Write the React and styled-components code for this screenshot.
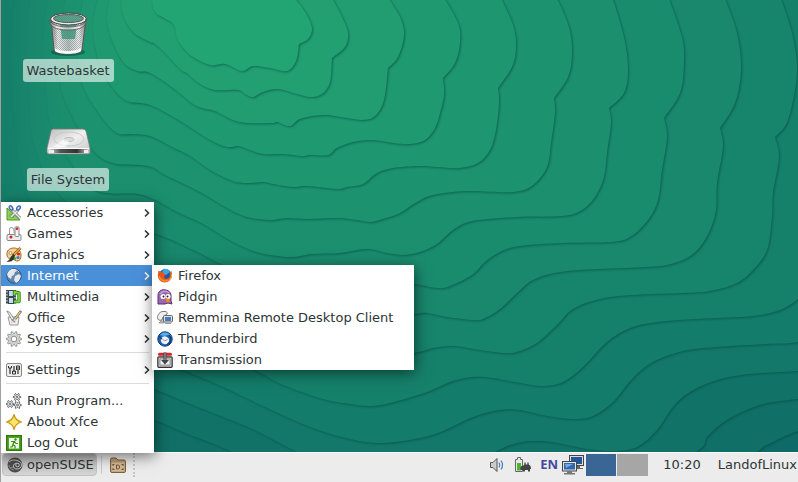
import React from "react";
import styled, { createGlobalStyle, css } from "styled-components";

const GlobalStyle = createGlobalStyle`
  *, *::before, *::after { box-sizing: border-box; }
  body { margin: 0; }
  button { font: inherit; color: inherit; border: 0; padding: 0; background: none; text-align: left; cursor: default; }
  ul { list-style: none; margin: 0; padding: 0; }
`;

const Screen = styled.div`
  display: flex;
  flex-direction: column;
  min-height: 100vh;
  border-left: 1px solid #a3a0a2;
  color: #2e3436;
  font: 13px/21px "DejaVu Sans", sans-serif;
  overflow: hidden;
`;

const Workspace = styled.main`
  flex: 1;
  position: relative;
  isolation: isolate;
  padding: 10px 22px;
`;

const WallpaperSvg = styled.svg`
  position: absolute;
  inset: 0;
  width: 100%;
  height: 100%;
  z-index: -1;
`;

const Shortcuts = styled.div`
  display: flex;
  flex-direction: column;
  align-items: center;
  gap: 37px;
  width: 90px;
`;

const Shortcut = styled.button`
  display: flex;
  flex-direction: column;
  align-items: center;
  gap: 1px;

  svg { width: 48px; height: 48px; display: block; }
`;

const ShortcutLabel = styled.span`
  padding: 1px 4px;
  border-radius: 3px;
  background: rgba(255, 255, 255, 0.6);
  white-space: nowrap;
`;

const Panel = styled.footer`
  position: relative;
  display: flex;
  align-items: center;
  height: 30px;
  padding: 0 1px 6px 1px;
  border-top: 1px solid #fafafa;
  background: #ececec;
  white-space: nowrap;
`;

const StartButton = styled.button`
  display: flex;
  align-items: center;
  gap: 4px;
  height: 23px;
  padding: 0 2px 0 4px;
  border: 1px solid #c2c2c2;
  border-radius: 4px;
  background: linear-gradient(#b4b4b4, #d6d6d6);
`;

const Divider = styled.span`
  width: 1px;
  height: 18px;
  margin: 0 8px 0 4px;
  background: #c8c8c8;
`;

const Grip = styled.span`
  width: 0;
  height: 24px;
  margin-left: 7px;
  border-left: 2px dotted #c6c6c6;
`;

const PanelButton = styled.button`
  display: flex;
`;

const Tray = styled.div`
  display: flex;
  align-items: center;
  margin-left: auto;
`;

const TrayButton = styled.button`
  display: flex;
  margin-right: ${(p) => p.$gap}px;
`;

const Language = styled.button`
  width: 18px;
  margin-right: 4px;
  color: #434a9f;
  font: bold 13px/21px "Noto Sans", sans-serif;
`;

const Workspaces = styled.div`
  display: flex;
  gap: 1px;
`;

const Pager = styled.button`
  width: ${(p) => (p.$active ? 30 : 31)}px;
  height: 22px;
  background: ${(p) => (p.$active ? "#396695" : "#a6a6a6")};
`;

const Clock = styled.time`
  margin: 0 17px 0 15px;
`;

const menuBox = css`
  position: absolute;
  z-index: 2;
  background: #fff;
  box-shadow: 1px 3px 14px rgba(0, 0, 0, 0.55);
`;

const Menu = styled.ul`
  ${menuBox}
  left: 0;
  bottom: 29px;
  width: 153px;
`;

const Submenu = styled.ul`
  ${menuBox}
  left: calc(100% - 2px);
  top: 0;
  width: 262px;
`;

const MenuEntry = styled.li`
  position: relative;
`;

const MenuButton = styled.button`
  display: flex;
  align-items: center;
  gap: 5px;
  width: 100%;
  height: 21px;
  padding: 0 4px 0 5px;
  white-space: nowrap;
  ${(p) => p.$active && css`
    background: #4a90d9;
    color: #fff;
  `}

  span { flex: 1; }
`;

const Rule = styled.li`
  height: 10px;
  padding: 3px 5px 0;

  &::before {
    content: "";
    display: block;
    height: 1px;
    background: #dcdcdc;
  }
`;

/* Each ridge is a list of smooth runs; runs meet at a sharp notch. */
const ridges = [
  [[[152,-4],[155,12],[173,24],[178,40],[190,55],[210,65],[225,64],[242,71],[253,66],[270,68],[287,71],[296,61],[299,44]],[[299,44],[308,39],[312,28],[305,12],[293,-4]]],
  [[[121,-4],[123,15],[133,32],[150,42],[155,44],[165,53],[180,69],[188,74],[200,84],[215,90],[238,90],[245,94],[253,97],[263,92],[278,89],[297,94],[310,97],[322,94],[330,82],[332,58]],[[332,58],[345,47],[348,33],[342,17],[331,-4]]],
  [[[110,-4],[107,20],[112,40],[123,62],[137,71],[150,73],[173,88],[193,104],[205,109],[215,111],[233,120],[247,123],[272,123],[277,122],[290,126],[300,119],[323,115],[347,118],[363,120],[375,116],[384,100],[388,68]],[[388,68],[398,57],[404,35],[400,17],[387,-4]]],
  [[[98,-4],[93,30],[100,65],[112,87],[127,101],[150,105],[180,121],[210,140],[227,147],[238,146],[247,149],[263,154],[283,154],[302,156],[310,155],[328,155],[337,148],[353,142],[373,140],[393,143],[410,144],[425,140],[435,128],[440,113],[444,95],[443,78]],[[443,78],[455,63],[460,43],[458,23],[443,-4]]],
  [[[84,-4],[77,40],[82,83],[100,115],[117,133],[133,134],[150,136],[170,146],[190,156],[210,170],[233,181],[247,183],[263,182],[273,184],[293,187],[307,186],[337,189],[347,187],[363,184],[377,173],[393,168],[420,166],[437,167],[460,168],[478,163],[490,150],[496,130],[499,103],[498,88]],[[498,88],[512,67],[516,47],[513,25],[500,-4]]],
  [[[66,-4],[59,40],[60,83],[70,112],[87,142],[100,157],[117,164],[148,166],[167,176],[200,192],[227,208],[247,217],[270,220],[287,218],[307,219],[337,218],[357,220],[370,222],[383,219],[400,213],[417,202],[433,195],[467,191],[513,192],[533,185],[547,167],[551,143],[555,113],[554,98]],[[554,98],[568,77],[572,53],[569,27],[556,-4]]],
  [[[48,-4],[43,50],[47,97],[50,123],[67,157],[95,190],[137,194],[153,199],[177,212],[203,224],[233,242],[260,253],[290,257],[313,254],[340,253],[367,249],[387,253],[403,255],[420,252],[437,244],[453,230],[473,221],[517,217],[563,216],[582,210],[595,197],[604,177],[607,153],[611,123],[609,108]],[[609,108],[624,93],[628,70],[624,37],[612,-4]]],
  [[[31,-4],[26,50],[30,110],[34,145],[53,187],[90,218],[153,233],[193,250],[223,265],[260,281],[300,291],[340,288],[375,280],[414,284],[437,288],[450,286],[472,275],[485,262],[500,252],[520,246],[563,243],[610,242],[630,237],[648,220],[658,200],[662,170],[667,137],[664,118]],[[664,118],[680,93],[684,63],[682,37],[668,-4]]],
  [[[14,-4],[11,60],[15,133],[22,170],[34,206],[80,244],[153,266],[220,294],[275,317],[320,322],[370,316],[414,314],[427,313],[447,317],[472,320],[483,319],[500,309],[517,293],[533,280],[560,272],[600,269],[647,267],[667,265],[687,258],[700,247],[710,230],[716,210],[717,183],[723,147],[720,128]],[[720,128],[735,103],[741,70],[737,33],[724,-4]]],
  [[[-9,-4],[-9,180],[50,260],[153,297],[230,329],[290,350],[350,363],[414,353],[433,348],[453,346],[480,350],[503,353],[517,352],[537,343],[557,325],[573,309],[600,299],[633,295],[683,293],[710,291],[737,283],[753,270],[767,250],[772,217],[773,193],[779,157],[775,137]],[[775,137],[788,120],[797,73],[792,33],[780,-4]]],
  [[[-9,-4],[-9,230],[50,290],[153,326],[220,353],[255,370],[283,385],[323,399],[350,404],[370,406],[390,403],[427,392],[453,381],[473,377],[493,378],[520,383],[543,386],[563,382],[583,367],[607,342],[633,327],[667,321],[717,318],[753,316],[780,310],[798,299],[825,277],[840,190]],[[840,190],[850,-4]]],
  [[[-9,-4],[-9,280],[100,336],[183,370],[223,387],[267,408],[310,427],[350,439],[383,443],[420,438],[443,431],[473,417],[500,410],[520,410],[547,416],[573,419],[593,416],[613,402],[633,378],[653,362],[683,351],[717,347],[767,344],[798,342],[850,330]],[[850,330],[850,-4]]],
  [[[-9,-4],[-9,330],[100,368],[154,389],[200,408],[250,428],[297,452],[350,477],[430,485],[495,452],[517,443],[537,441],[557,443],[587,449],[613,451],[637,447],[657,430],[673,407],[690,392],[717,380],[750,374],[798,371],[850,366]],[[850,366],[850,-4]]],
  [[[-9,-4],[-9,370],[80,392],[154,420],[190,435],[232,452],[350,510],[620,500],[696,452],[707,437],[727,420],[760,405],[798,399],[850,395]],[[850,395],[850,-4]]],
  [[[-9,-4],[-9,410],[120,436],[190,470],[400,560],[700,500],[757,452],[773,442],[798,431],[850,415]],[[850,415],[850,-4]]],
];

const ridgeFills = ["#23a573", "#22a072", "#219d71", "#1f9970", "#1e966f", "#1d926f", "#1b8f6e", "#1a8c6e", "#19886d", "#17846c", "#16816b", "#147c6a", "#137869", "#117368", "#106f67"];

function smooth(points, first) {
  let d = first ? `M${points[0].join(" ")}` : "";
  for (let i = 0; i < points.length - 1; i += 1) {
    const a = points[i - 1] || points[i];
    const b = points[i];
    const c = points[i + 1];
    const e = points[i + 2] || c;
    d += `C${b[0] + (c[0] - a[0]) / 6} ${b[1] + (c[1] - a[1]) / 6} ${c[0] - (e[0] - b[0]) / 6} ${c[1] - (e[1] - b[1]) / 6} ${c[0]} ${c[1]}`;
  }
  return d;
}

function Wallpaper() {
  return (
    <WallpaperSvg viewBox="1 0 797 452" preserveAspectRatio="xMidYMid slice" aria-hidden="true">
      <defs>
        <filter id="ridge" filterUnits="userSpaceOnUse" x="-20" y="-20" width="900" height="620" colorInterpolationFilters="sRGB">
          <feDropShadow dx="1" dy="1" stdDeviation="1" floodColor="#04483f" floodOpacity="0.6" />
        </filter>
        <linearGradient id="westSlope">
          <stop stopColor="#147c69" stopOpacity=".85" />
          <stop offset="1" stopColor="#1d926f" stopOpacity="0" />
        </linearGradient>
      </defs>
      <rect x="-20" y="-20" width="900" height="620" fill="#0e6a66" />
      {ridges.map((runs, i) => (
        <path key={i} filter="url(#ridge)" fill={ridgeFills[i]} d={`${runs.map((r, n) => smooth(r, n === 0)).join("")}Z`} />
      )).reverse()}
      <path d="M0 0h95v204H0z" fill="url(#westSlope)" />
    </WallpaperSvg>
  );
}

const BinIcon = () => (
  <svg viewBox="0 0 48 48" aria-hidden="true">
    <defs>
      <linearGradient id="binSide"><stop stopColor="#777" /><stop offset=".2" stopColor="#eee" /><stop offset=".5" stopColor="#b9c4bf" /><stop offset=".8" stopColor="#eee" /><stop offset="1" stopColor="#777" /></linearGradient>
      <pattern id="mesh" width="2" height="2" patternUnits="userSpaceOnUse"><path d="M0 0h1v1H0zM1 1h1v1H1z" fill="#66736e" opacity=".45" /></pattern>
    </defs>
    <ellipse cx="24" cy="42" rx="17" ry="4" fill="#0b4a3a" opacity=".55" />
    <path d="M7 9l3 31c1 5 27 5 28 0l4-31z" fill="url(#binSide)" stroke="#555" />
    <path d="M16 14h17l-2 15H18z" fill="#259a77" opacity=".75" />
    <path d="M9 14l3 25c3 4 21 4 24 0l3-25z" fill="url(#mesh)" />
    <path d="M11 38c4 4 22 4 26 0v3c-3 4-23 4-26 0z" fill="#fff" opacity=".85" />
    <ellipse cx="24.500" cy="9" rx="18" ry="6" fill="#e9e9e9" stroke="#444" />
    <ellipse cx="24.500" cy="8.500" rx="15" ry="4" fill="#56a78d" stroke="#555" />
    <ellipse cx="24.500" cy="8.500" rx="15" ry="4" fill="url(#mesh)" />
    <path d="M6 9c0 4 5 8 18 8s18-4 18-8v3c0 4-5 8-18 8S6 16 6 12z" fill="url(#binSide)" stroke="#555" strokeWidth=".8" />
  </svg>
);

const DriveIcon = () => (
  <svg viewBox="0 0 48 48" aria-hidden="true">
    <defs>
      <linearGradient id="driveTop" x2="1" y2="1"><stop stopColor="#bbb" /><stop offset=".5" stopColor="#f0f0f0" /><stop offset="1" stopColor="#c2c2c2" /></linearGradient>
      <linearGradient id="driveFront"><stop stopColor="#ddd" /><stop offset=".3" stopColor="#555" /><stop offset=".7" stopColor="#333" /><stop offset="1" stopColor="#ccc" /></linearGradient>
    </defs>
    <path d="M9 10h30q2 0 3 2l4 17v5q0 1-2 1H5q-2 0-2-2v-4L7 12q0-2 2-2z" fill="url(#driveTop)" stroke="#777" strokeWidth=".8" />
    <path d="M4 30h41v4H4z" fill="url(#driveFront)" />
    <path d="M4 29.500h41" stroke="#fff" />
    <path d="M5 31h5v3H5zM40 31h4v3h-4z" fill="#eee" />
    <ellipse cx="25" cy="20" rx="15" ry="7" fill="none" stroke="#c3c3c3" strokeWidth=".8" />
    <ellipse cx="25" cy="20.500" rx="5" ry="2" fill="#ddd" stroke="#b5b5b5" strokeWidth=".8" />
    <path d="M20 20l-11 8h12q4-3 4-6z" fill="#fff" opacity=".55" />
  </svg>
);

const gearTeeth = (count, cx, cy, inner, outer) => {
  const pts = [];
  for (let i = 0; i < count * 4; i += 1) {
    const r = i % 4 < 2 ? outer : inner;
    const t = ((i - 0.5) / (count * 4)) * Math.PI * 2;
    pts.push(`${(cx + r * Math.cos(t)).toFixed(2)},${(cy + r * Math.sin(t)).toFixed(2)}`);
  }
  return pts.join(" ");
};

const glyphs = {
  accessories: (
    <>
      <path d="M1 3v12h13z" fill="#8ed058" stroke="#4f9a22" />
      <path d="M4 9v3h4z" fill="#fff" stroke="#4f9a22" strokeWidth=".7" />
      <path d="M6 5l8 8M12 5L5 12" stroke="#777" strokeWidth="3" />
      <path d="M6 5l8 8M12 5L5 12" stroke="#e8e8e8" strokeWidth="1.600" />
      <ellipse cx="5" cy="3" rx="1.500" ry="2.300" transform="rotate(-35 5 3)" fill="#dbe6f4" stroke="#3868a8" strokeWidth="1.400" />
      <ellipse cx="12.500" cy="3" rx="1.500" ry="2.300" transform="rotate(35 12.500 3)" fill="#dbe6f4" stroke="#3868a8" strokeWidth="1.400" />
    </>
  ),
  games: (
    <>
      <path d="M3.500 9V3.500Q3.500 1.500 5.500 1.500T8 4v3h2" fill="none" stroke="#999" />
      <rect x="1" y="8.500" width="14" height="6" rx="1" fill="#ececec" stroke="#888" />
      <rect x="9" y=".8" width="4" height="9.700" rx="1" fill="#f5f5f5" stroke="#888" />
      <circle cx="11" cy="2.800" r="1.300" fill="#d22" />
      <circle cx="5" cy="11" r="1.600" fill="#d22" />
    </>
  ),
  graphics: (
    <>
      <path d="M8 1C3 1 .5 4 1 8c.4 3 2 4 4 3s3 3 6 3 4-2 4-6-3-7-7-7z" fill="#f3d29a" stroke="#a5691c" />
      <circle cx="4.500" cy="6" r="1.500" fill="#fff" stroke="#a5691c" strokeWidth=".7" />
      <circle cx="12.500" cy="7" r="1.600" fill="#d22" /><circle cx="12" cy="10.500" r="1.600" fill="#37c" /><circle cx="8.500" cy="11.500" r="1.600" fill="#3a3" />
      <path d="M14.500 1L7 8.500" stroke="#8a5716" strokeWidth="2.800" /><path d="M14.500 1L7 8.500" stroke="#e8a743" strokeWidth="1.600" />
      <path d="M7.500 7L5 9.500Q4 13 .5 14.500q5 1 7-2l1.500-4z" fill="#333" />
    </>
  ),
  internet: (
    <>
      <circle cx="8" cy="8" r="7.200" fill="#5f86ad" stroke="#33557c" />
      <path d="M3 3c2-2 4-2 6-2l2 2-2 1-1 3-2 1-1 3-3-2-1-3zM9 8l4-2 2 2-2 5-3 2-2-3z" fill="#e3e8ea" />
      <path d="M2 5c2-4 8-5 11-1" stroke="#fff" fill="none" opacity=".6" />
    </>
  ),
  multimedia: (
    <>
      <path d="M0 1h10v14H0z" fill="#3a4750" /><path d="M3 2h4v5H3zM3 9h4v5H3z" fill="#c5dced" />
      <path d="M1 2v13M9 2v13" stroke="#fff" strokeDasharray="1.500 1.500" />
      <path d="M8 12.500h5V4L8.500 2.800V6" fill="none" stroke="#2d7d10" strokeWidth="3.400" strokeLinejoin="round" />
      <path d="M8 12.500h5V4L8.500 2.800V6" fill="none" stroke="#7bd843" strokeWidth="1.800" strokeLinejoin="round" />
    </>
  ),
  office: (
    <>
      <path d="M2 7h11l-1 8H4z" fill="#eee" stroke="#999" />
      <path d="M5 9h5v4H5z" fill="#cfdcf0" /><path d="M6 10l3 2" stroke="#d55" />
      <path d="M.8 1l3.200 1.500 4 6.500-2 1z" fill="#f3f3f3" stroke="#777" strokeWidth=".8" />
      <path d="M15 1l-6 8" stroke="#555" strokeWidth="2.600" /><path d="M14.500 1.500L9 9" stroke="#e9c27c" strokeWidth="1.500" />
    </>
  ),
  system: (
    <>
      <polygon points={gearTeeth(10, 8, 8, 5.5, 7.6)} fill="#dedede" stroke="#8b8b8b" strokeWidth=".9" strokeLinejoin="round" />
      <circle cx="8" cy="8" r="2.800" fill="#fff" stroke="#8b8b8b" /><circle cx="8" cy="8" r="4.200" fill="none" stroke="#bbb" strokeWidth=".8" />
    </>
  ),
  settings: (
    <>
      <rect x=".5" y="1.500" width="15" height="13" rx="1.500" fill="#eee" stroke="#888" />
      <path d="M4 6v6M8 4v6M12 7v5" stroke="#333" strokeWidth="1.200" />
      <path d="M2.500 4v2h3V4M10.500 8V4h3v4M6.500 9h3v3h-3zM10.500 6h3" fill="none" stroke="#333" />
    </>
  ),
  run: (
    <g fill="#fff" stroke="#444" strokeWidth=".8" strokeLinejoin="round">
      <polygon points={gearTeeth(6, 11, 4, 2.3, 3.8)} /><circle cx="11" cy="4" r="1" />
      <polygon points={gearTeeth(6, 4, 11, 2.3, 3.8)} /><circle cx="4" cy="11" r="1" />
      <polygon points={gearTeeth(6, 11.5, 12, 2.3, 3.8)} /><circle cx="11.500" cy="12" r="1" />
    </g>
  ),
  about: <path d="M8 .5c.9 4 3.500 6.600 7.500 7.500-4 .9-6.600 3.500-7.500 7.500C7.100 11.500 4.500 8.900.5 8 4.500 7.100 7.100 4.500 8 .5z" fill="#fbe468" stroke="#c69a17" strokeWidth="1.200" strokeLinejoin="round" />,
  logout: (
    <>
      <rect x=".7" y=".7" width="14.600" height="14.600" fill="#4fa81d" stroke="#2f7a0a" strokeWidth="1.400" />
      <rect x="3" y="3" width="10" height="10.500" fill="#f2faed" />
      <circle cx="9.500" cy="4.500" r="1.200" fill="#388c12" />
      <path d="M5 6.500h3L7 9.500l2 1.500v2.500M7 9.500L6 12H4M8.500 6.500l1.500 2h2" stroke="#388c12" strokeWidth="1.200" fill="none" />
    </>
  ),
  firefox: (
    <>
      <circle cx="8.300" cy="7.500" r="6.500" fill="#2457a8" /><path d="M6 1c4-1 6 1 7 3l-4 3-4-2z" fill="#39a9df" />
      <path d="M1.500 2.500L4 4l3-.5-1 2 3 1-2 2 1 2c3 1 5-1 5-4l1-4c2 4 1 8-2 10.500C7 16.500 1 13 .8 7.500z" fill="#e3561a" />
      <path d="M13 3c2 5 1 8-3 10 3 0 5-3 4.800-6z" fill="#fbc02d" /><path d="M2 8c1 4 5 6 9 4" stroke="#f58b20" strokeWidth="1.500" fill="none" />
    </>
  ),
  pidgin: (
    <>
      <path d="M1 15V7C1 3 3 .8 7 .8S14 3 14 7v5l1 3-4-1-3 1z" fill="#9968ae" stroke="#5b2d73" />
      <path d="M3 5c2-3 6-4 9-1" stroke="#c9a5d6" strokeWidth="1.300" fill="none" />
      <circle cx="6" cy="7.500" r="2.500" fill="#fff" /><circle cx="11" cy="7.500" r="2.500" fill="#fff" />
      <circle cx="6.500" cy="7.500" r="1" fill="#222" /><circle cx="10.500" cy="7.500" r="1" fill="#222" />
      <path d="M8 9l4 1 1 3-3 .5z" fill="#f28a22" />
    </>
  ),
  remmina: (
    <>
      <path d="M6 1.500c4-.5 5 1.500 4 2.500L6 7l-1 3c-3 1-4.500-.5-4.500-2.500 0-3 2.500-6 5.500-6z" fill="#eee" stroke="#777" />
      <path d="M2 13h5v-2H4z" fill="#ccc" stroke="#777" strokeWidth=".7" />
      <rect x="6.500" y="5.500" width="9" height="6.500" rx="1" fill="#e3e3de" stroke="#666" />
      <path d="M8 7h6v4H8z" fill="#487ac0" /><path d="M8 13.500h6" stroke="#999" />
    </>
  ),
  thunderbird: (
    <>
      <circle cx="8" cy="8" r="7.200" fill="#1e63b4" stroke="#103968" />
      <path d="M3 4C6 0 12 1 14 5l-3-1-4 1z" fill="#56b0ea" />
      <path d="M4 7q3-3 6-1 3 2 2 5-2 3-5 2-4-1-3-6z" fill="#eef1f5" />
      <path d="M5.500 8l2 2 3-1.500" fill="none" stroke="#8f9dad" /><path d="M1.500 5l3.500 3M12 4c3 3 2 7-2 10" stroke="#113f80" strokeWidth="1.500" fill="none" />
    </>
  ),
  transmission: (
    <>
      <rect x=".8" y="4.800" width="14.400" height="10.500" rx="1" fill="#c6c6c6" stroke="#333" strokeWidth="1.200" />
      <path d="M3 13V7h10v6z" fill="#eee" stroke="#666" strokeWidth=".6" />
      <rect x="1" y=".7" width="14" height="3" rx="1.500" fill="#d9222a" />
      <path d="M6.500.5h3V8H12l-4 4.500L4 8h2.500z" fill="#444" /><path d="M7.500 1v7h1V1z" fill="#aaa" />
    </>
  ),
  suse: (
    <>
      <circle cx="8" cy="8" r="7.500" fill="#4e4e4e" />
      <path d="M2 5c2-2 5-2.500 8-1.500 3 1 4.500 2 4.500 4.500s-2 4-4.500 4-4-1.500-3.500-3.500S9 6 10.500 6.500" fill="none" stroke="#c3c3c3" strokeWidth="1" />
      <circle cx="10.500" cy="8" r="1.800" fill="none" stroke="#c3c3c3" /><path d="M2 8c0 3 2 4.500 5 5M3 11l3-1" stroke="#8c8c8c" fill="none" />
    </>
  ),
  folder: (
    <>
      <path d="M.5 13V2.500Q.5 1 2 1h4l2 2h6q1.500 0 1.500 1.500V14q0 1.500-1.500 1.500H2Q.5 15.500.5 14z" fill="#b89a73" stroke="#7b603e" />
      <path d="M1.500 5.500h13v9h-13z" fill="#d3ba96" />
      <path d="M6.500 8h2l1 1v2l-1 1h-2zM2.500 7.500h2M2.500 12.500h2M11.500 7.500h2M11.500 12.500h2M3 7.500v1.500M13 7.500v1.500M3 11v1.500M13 11v1.500" fill="none" stroke="#705637" />
    </>
  ),
  sound: (
    <>
      <path d="M1.500 5.500h2.500l4-4v13l-4-4H1.500z" fill="#ccc" stroke="#555" />
      <path d="M10 5.500q1.500 2.500 0 5M12 3.500q3 4.500 0 9" fill="none" stroke="#477ab9" strokeWidth="1.200" />
    </>
  ),
  battery: (
    <>
      <path d="M2.500.5h3v2h2v12h-7v-12h2z" fill="#e8e8e8" stroke="#666" /><path d="M2 6h4v7.500H2z" fill="#4fb52c" />
      <path d="M5.500 13v-2q0-2.500 3-2.500l1-1h4q2.500.5 2.500 4.500h-1v2.500h-2V13h-3v1.500H8V13z" fill="#444" />
      <path d="M10 5.500V8M13 5.500V8" stroke="#444" strokeWidth="1.300" />
    </>
  ),
};

function Icon({ name, size = 16 }) {
  return <svg width={size} height={size} viewBox="0 0 16 16" aria-hidden="true">{glyphs[name]}</svg>;
}

const NetworkIcon = () => (
  <svg width="22" height="20" viewBox="0 0 22 20" aria-hidden="true">
    <rect x="7.500" y=".5" width="14" height="10" fill="#ddd" stroke="#444" /><path d="M9 2h11v7H9z" fill="#24549b" />
    <path d="M12 11h6v2h3v1h-9z" fill="#666" />
    <rect x=".5" y="6.500" width="14" height="9.500" fill="#e5e5e5" stroke="#444" /><path d="M2 8h11v6.500H2z" fill="#2e67b1" />
    <path d="M3 9h8l-7 4z" fill="#7da8dd" /><path d="M5 16h5v2h3v1.500H2V18h3z" fill="#777" />
  </svg>
);

const Chevron = () => (
  <svg width="6" height="10" viewBox="0 0 6 10" aria-hidden="true">
    <path d="M1 1.500L4.500 5 1 8.500" fill="none" stroke="currentColor" strokeWidth="1.600" />
  </svg>
);

const internetApps = [
  ["firefox", "Firefox"],
  ["pidgin", "Pidgin"],
  ["remmina", "Remmina Remote Desktop Client"],
  ["thunderbird", "Thunderbird"],
  ["transmission", "Transmission"],
];

const menuEntries = [
  { icon: "accessories", label: "Accessories", more: true },
  { icon: "games", label: "Games", more: true },
  { icon: "graphics", label: "Graphics", more: true },
  { icon: "internet", label: "Internet", more: true, apps: internetApps },
  { icon: "multimedia", label: "Multimedia", more: true },
  { icon: "office", label: "Office", more: true },
  { icon: "system", label: "System", more: true },
  { rule: true },
  { icon: "settings", label: "Settings", more: true },
  { rule: true },
  { icon: "run", label: "Run Program..." },
  { icon: "about", label: "About Xfce" },
  { icon: "logout", label: "Log Out" },
];

function MenuItem({ icon, label, more, apps }) {
  return (
    <MenuEntry role="none">
      <MenuButton role="menuitem" $active={Boolean(apps)} aria-haspopup={more ? "menu" : undefined} aria-expanded={more ? Boolean(apps) : undefined}>
        <Icon name={icon} />
        <span>{label}</span>
        {more && <Chevron />}
      </MenuButton>
      {apps && (
        <Submenu role="menu" aria-label={label}>
          {apps.map(([appIcon, name]) => <MenuItem key={name} icon={appIcon} label={name} />)}
        </Submenu>
      )}
    </MenuEntry>
  );
}

export default function App() {
  return (
    <Screen>
      <GlobalStyle />
      <Workspace>
        <Wallpaper />
        <Shortcuts>
          <Shortcut><BinIcon /><ShortcutLabel>Wastebasket</ShortcutLabel></Shortcut>
          <Shortcut><DriveIcon /><ShortcutLabel>File System</ShortcutLabel></Shortcut>
        </Shortcuts>
      </Workspace>
      <Panel>
        <StartButton aria-haspopup="menu" aria-expanded="true"><Icon name="suse" />openSUSE</StartButton>
        <Divider />
        <PanelButton aria-label="Files"><Icon name="folder" /></PanelButton>
        <Grip />
        <Tray>
          <TrayButton $gap={10} aria-label="Volume"><Icon name="sound" /></TrayButton>
          <TrayButton $gap={9} aria-label="Power"><Icon name="battery" /></TrayButton>
          <Language>EN</Language>
          <TrayButton $gap={2} aria-label="Network"><NetworkIcon /></TrayButton>
          <Workspaces>
            <Pager $active aria-label="Workspace 1" />
            <Pager aria-label="Workspace 2" />
          </Workspaces>
          <Clock>10:20</Clock>
          <span>LandofLinux</span>
        </Tray>
        <Menu role="menu" aria-label="Applications">
          {menuEntries.map((entry, i) => (entry.rule ? <Rule key={i} role="separator" /> : <MenuItem key={entry.label} {...entry} />))}
        </Menu>
      </Panel>
    </Screen>
  );
}
